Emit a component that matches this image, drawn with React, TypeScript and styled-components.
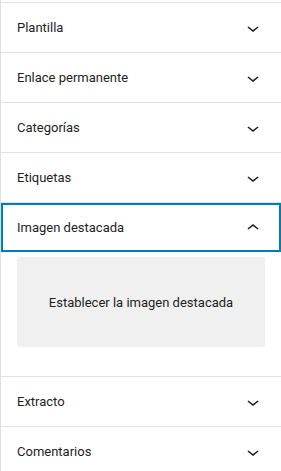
import React from "react";
import styled, { createGlobalStyle } from "styled-components";

const GlobalStyle = createGlobalStyle`
  html, body { margin: 0; padding: 0; background: #fff; }
  body { font-family: Roboto, "Noto Sans", sans-serif; -webkit-font-smoothing: antialiased; }
`;

const Sidebar = styled.div`
  box-sizing: border-box;
  width: 281px;
  height: 471px;
  overflow: hidden;
  border-left: 1px solid #e0e0e0;
  padding-top: 2px;
  background: #fff;
`;

const Panel = styled.div<{ $open?: boolean }>`
  border-top: 1px solid #e0e0e0;
  padding-bottom: ${(p) => (p.$open ? "29px" : "0")};
`;

const Toggle = styled.button<{ $focused?: boolean }>`
  box-sizing: border-box;
  display: flex;
  align-items: center;
  justify-content: space-between;
  width: 100%;
  height: 49px;
  margin: 0;
  padding: 0 16px;
  border: none;
  background: transparent;
  font-family: Roboto, "Noto Sans", sans-serif;
  font-size: 13px;
  font-weight: 400;
  color: #1e1e1e;
  text-align: left;
  cursor: pointer;
  box-shadow: ${(p) => (p.$focused ? "inset 0 0 0 2px #007cba" : "none")};
`;

const Title = styled.span`
  line-height: 1;
`;

const Icon = styled.svg`
  width: 24px;
  height: 24px;
  fill: #1e1e1e;
  flex: none;
`;

const FeaturedButton = styled.button`
  box-sizing: border-box;
  display: flex;
  align-items: center;
  justify-content: center;
  width: calc(100% - 32px);
  height: 90px;
  margin: 5px 16px 0;
  border: none;
  border-radius: 2px;
  background: #f0f0f0;
  font-family: Roboto, "Noto Sans", sans-serif;
  font-size: 13px;
  font-weight: 400;
  color: #1e1e1e;
`;

const ChevronDown = () => (
  <Icon viewBox="0 0 24 24" aria-hidden>
    <path d="M17.5 11.6L12 16l-5.5-4.4.9-1.2L12 14l4.6-3.6 1 1.2z" />
  </Icon>
);

const ChevronUp = () => (
  <Icon viewBox="0 0 24 24" aria-hidden>
    <path d="M6.5 12.4L12 8l5.5 4.4-.9 1.2L12 10l-4.6 3.6-1-1.2z" />
  </Icon>
);

const closedPanels = ["Plantilla", "Enlace permanente", "Categorías", "Etiquetas"];
const afterPanels = ["Extracto", "Comentarios"];

export default function App() {
  return (
    <>
      <GlobalStyle />
      <Sidebar>
        {closedPanels.map((t) => (
          <Panel key={t}>
            <Toggle>
              <Title>{t}</Title>
              <ChevronDown />
            </Toggle>
          </Panel>
        ))}
        <Panel $open>
          <Toggle $focused>
            <Title>Imagen destacada</Title>
            <ChevronUp />
          </Toggle>
          <FeaturedButton>Establecer la imagen destacada</FeaturedButton>
        </Panel>
        {afterPanels.map((t) => (
          <Panel key={t}>
            <Toggle>
              <Title>{t}</Title>
              <ChevronDown />
            </Toggle>
          </Panel>
        ))}
      </Sidebar>
    </>
  );
}
